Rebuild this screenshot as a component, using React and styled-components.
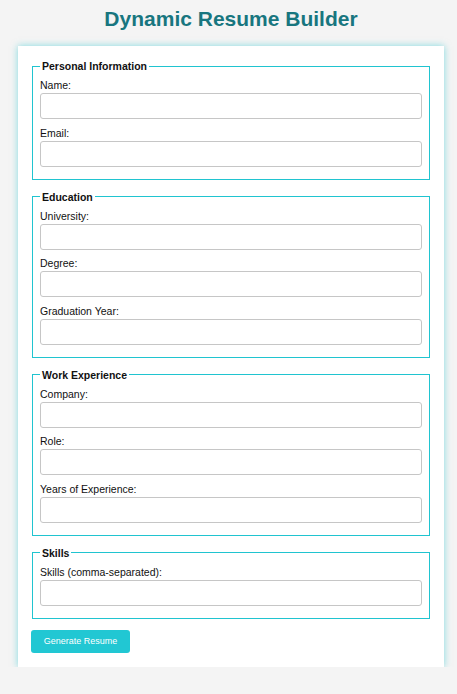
import React from "react";
import styled, { createGlobalStyle } from "styled-components";

const Global = createGlobalStyle`
  html, body { margin: 0; padding: 0; background: #f4f4f4; }
  body { font-family: "Liberation Sans", Arial, sans-serif; color: #111; }
  * { box-sizing: border-box; }
`;

const Page = styled.div`
  width: 426px;
  margin-left: 18px;
  padding-top: 7px;
`;

const Title = styled.h1`
  margin: 0 0 15px;
  text-align: center;
  font-size: 21px;
  line-height: 24px;
  font-weight: bold;
  color: #18767f;
`;

const Card = styled.form`
  background: #fff;
  padding: 14px;
  box-shadow: 0 0 7px rgba(32, 197, 208, 0.55);
`;

const Section = styled.fieldset`
  margin: 0 0 10.5px;
  padding: 7px 7px 5px;
  border: 1px solid #20c4d0;
  min-width: 0;
`;

const Legend = styled.legend`
  padding: 0 2px;
  font-size: 10.5px;
  line-height: 12px;
  font-weight: bold;
  color: #111;
`;

const Label = styled.label`
  display: block;
  font-size: 10.5px;
  line-height: 12px;
  margin-bottom: 2px;
  color: #111;
`;

const Input = styled.input`
  display: block;
  width: 100%;
  height: 26px;
  margin: 0 0 7.5px;
  padding: 0 6px;
  border: 1px solid #c6c6c6;
  border-radius: 3px;
  background: #fff;
  font-family: inherit;
  font-size: 10.5px;
`;

const Button = styled.button`
  display: block;
  width: 99px;
  height: 23px;
  margin-left: -1px;
  padding: 0;
  border: none;
  border-radius: 3px;
  background: #21c7d3;
  color: #fff;
  font-family: inherit;
  font-size: 9px;
  cursor: pointer;
`;

const sections = [
  { title: "Personal Information", fields: ["Name:", "Email:"] },
  { title: "Education", fields: ["University:", "Degree:", "Graduation Year:"] },
  { title: "Work Experience", fields: ["Company:", "Role:", "Years of Experience:"] },
  { title: "Skills", fields: ["Skills (comma-separated):"] },
];

export default function App() {
  return (
    <>
      <Global />
      <Page>
        <Title>Dynamic Resume Builder</Title>
        <Card onSubmit={(e) => e.preventDefault()}>
          {sections.map((s) => (
            <Section key={s.title}>
              <Legend>{s.title}</Legend>
              {s.fields.map((f) => (
                <div key={f}>
                  <Label>{f}</Label>
                  <Input type="text" />
                </div>
              ))}
            </Section>
          ))}
          <Button type="submit">Generate Resume</Button>
        </Card>
      </Page>
    </>
  );
}
